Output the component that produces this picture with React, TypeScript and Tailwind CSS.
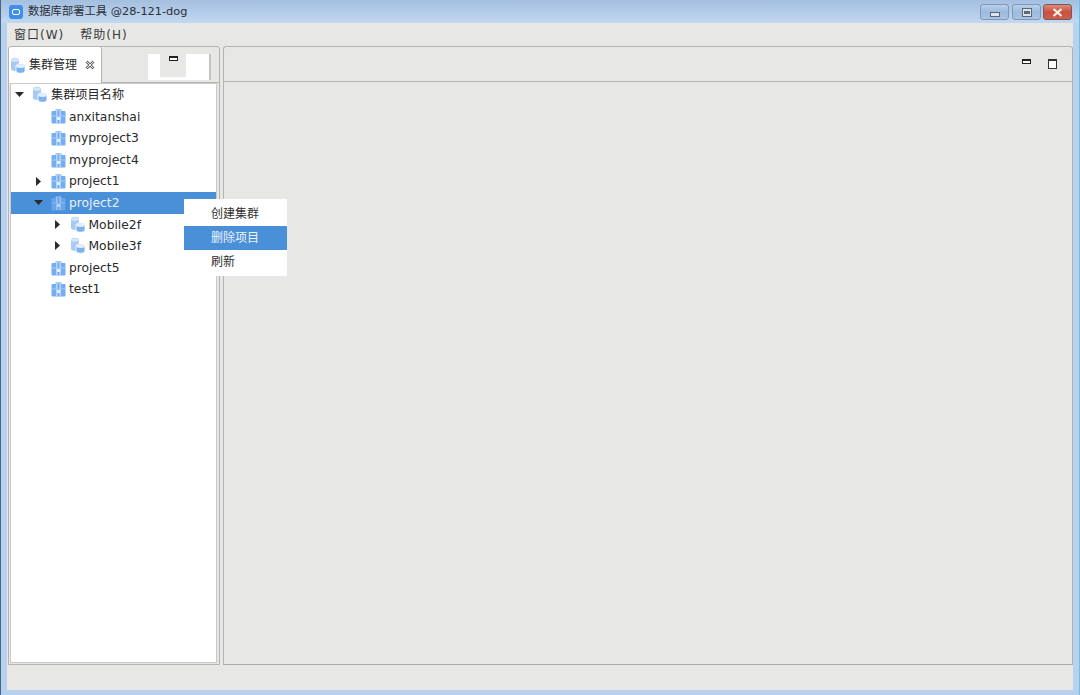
const LATIN_CJK = "font-['DejaVu_Sans','Noto_Sans_CJK_SC',sans-serif]";

function ClusterIcon({ dim = false }: { dim?: boolean }) {
  return (
    <svg width="16" height="17" viewBox="0 0 16 17" className={dim ? 'opacity-60 shrink-0' : 'shrink-0'}>
      <path d="M1 3c0-3 8-3 8 0v9c0 2.500-8 2.500-8 0z" fill="#a6caf4" />
      <ellipse cx="5" cy="3" rx="4" ry="1.800" fill="#d5e6fa" />
      <path d="M6 9c0-2.800 9-2.800 9 0v5c0 3-9 3-9 0z" fill="#7db2f0" stroke="#fff" strokeWidth="0.800" />
      <ellipse cx="10.500" cy="9" rx="4.500" ry="1.900" fill="#e3effc" />
    </svg>
  );
}

function ProjectIcon({ dim = false }: { dim?: boolean }) {
  return (
    <svg width="15" height="16" viewBox="0 0 15 16" className={dim ? 'opacity-70 shrink-0' : 'shrink-0'}>
      <rect x="0.500" y="3" width="14" height="12.500" rx="1" fill="#74aef2" />
      <path d="M4.500 3V1.200h6V3" fill="#8dbdf5" />
      <rect x="5" y="2" width="1.500" height="13" fill="#b9d6f8" />
      <rect x="8.500" y="2" width="1.500" height="13" fill="#b9d6f8" />
      <rect x="1" y="7.500" width="13" height="1" fill="#a8cbf6" />
      <rect x="6" y="9" width="3" height="3" fill="#e6f0fc" />
    </svg>
  );
}

function Caret({ open }: { open: boolean }) {
  return open ? (
    <svg width="9" height="5" viewBox="0 0 9 5" className="shrink-0">
      <path d="M0 0h9L4.500 5z" fill="#2a2a2a" />
    </svg>
  ) : (
    <svg width="5" height="9" viewBox="0 0 5 9" className="shrink-0">
      <path d="M0 0v9l5-4.500z" fill="#2a2a2a" />
    </svg>
  );
}

type Row = { label: string; depth: number; kind: 'cluster' | 'project'; caret?: 'open' | 'closed'; selected?: boolean };

const rows: Row[] = [
  { label: '集群项目名称', depth: 0, kind: 'cluster', caret: 'open' },
  { label: 'anxitanshai', depth: 1, kind: 'project' },
  { label: 'myproject3', depth: 1, kind: 'project' },
  { label: 'myproject4', depth: 1, kind: 'project' },
  { label: 'project1', depth: 1, kind: 'project', caret: 'closed' },
  { label: 'project2', depth: 1, kind: 'project', caret: 'open', selected: true },
  { label: 'Mobile2f', depth: 2, kind: 'cluster', caret: 'closed' },
  { label: 'Mobile3f', depth: 2, kind: 'cluster', caret: 'closed' },
  { label: 'project5', depth: 1, kind: 'project' },
  { label: 'test1', depth: 1, kind: 'project' },
];

const depthPad = ['pl-0 text-[12.200px]', 'pl-[19px] text-[12.300px]', 'pl-[38px] text-[12.300px]'];

function TreeRow({ row }: { row: Row }) {
  return (
    <div
      className={`flex h-[21.6px] items-center ${depthPad[row.depth]} ${
        row.selected ? 'bg-[#4a90d9] text-[#e8f0fa]' : 'text-[#2a2a2a]'
      }`}
    >
      <span className="flex w-[21px] shrink-0 justify-center pr-[5px]">
        {row.caret && <Caret open={row.caret === 'open'} />}
      </span>
      {row.kind === 'cluster' ? <ClusterIcon dim={row.selected} /> : <ProjectIcon dim={row.selected} />}
      <span className={`mt-[1px] whitespace-nowrap ${row.depth === 2 ? 'ml-[2.500px]' : 'ml-[3px]'}`}>{row.label}</span>
    </div>
  );
}

function MinMark() {
  return <span className="block h-[5px] w-[9px] border border-[#222] border-t-2 bg-white" />;
}

function MaxMark() {
  return <span className="block h-[10px] w-[9px] border border-[#333] border-t-2 bg-white" />;
}

function WinButton({ kind }: { kind: 'min' | 'max' | 'close' }) {
  if (kind === 'close') {
    return (
      <div className="flex h-[16px] w-[29px] items-center justify-center rounded-[3px] border border-[#7c5560] bg-gradient-to-b from-[#dd8a78] via-[#c9503c] to-[#c9604c]">
        <svg width="11" height="9" viewBox="0 0 11 9">
          <path d="M1.500 1l8 7M9.500 1l-8 7" stroke="#f4f0ee" strokeWidth="2.200" />
        </svg>
      </div>
    );
  }
  return (
    <div
      className={`flex h-[16px] w-[29px] items-center justify-center rounded-[3px] border border-[#7f98b8] bg-gradient-to-b from-[#b9d0ea] via-[#9db9dc] to-[#a9c4e4] ${
        kind === 'min' ? 'mr-[1px]' : ''
      }`}
    >
      {kind === 'min' ? (
        <span className="mt-[4px] block h-[5px] w-[10px] border border-[#59677a] bg-[#dfe3e8]" />
      ) : (
        <span className="flex h-[9px] w-[10px] items-center justify-center border border-[#59677a] bg-[#dfe3e8]">
          <span className="block h-[3px] w-[6px] bg-[#59677a]" />
        </span>
      )}
    </div>
  );
}

function ContextMenu() {
  return (
    <div className="absolute left-[183px] top-[199px] w-[103px] bg-white pb-[2px] pt-[2px] text-[12px] text-[#2f2f2f]">
      <div className="flex h-[25px] items-center pl-[27px]">创建集群</div>
      <div className="flex h-[24px] items-center bg-[#4a90d9] pl-[27px] text-[#edf3fb]">删除项目</div>
      <div className="flex h-[24px] items-center pl-[27px]">刷新</div>
    </div>
  );
}

export default function App() {
  return (
    <div
      className={`relative flex h-[695px] w-[1080px] flex-col overflow-hidden border-l border-r border-l-[#46658c] border-r-[#6cc0ea] bg-[#b8d1ec] ${LATIN_CJK}`}
    >
      {/* Title bar */}
      <div className="flex h-[23px] shrink-0 items-center bg-gradient-to-b from-[#a4bfdf] to-[#c2d8f0] pl-[8px] pr-[7px] pt-[1px]">
        <span className="flex h-[14px] w-[14px] items-center justify-center rounded-[3px] bg-[#3f8fe8]">
          <span className="block h-[6px] w-[8px] rounded-[2px] border border-white" />
        </span>
        <span className="ml-[5px] mt-[1px] text-[11.300px] text-[#2b2f36]">数据库部署工具 @28-121-dog</span>
        <div className="ml-auto flex gap-[2px]">
          <WinButton kind="min" />
          <WinButton kind="max" />
          <WinButton kind="close" />
        </div>
      </div>

      <div className="ml-[6px] mr-[6px] flex min-h-0 flex-1 flex-col bg-[#e7e7e5]">
        {/* Menu bar */}
        <div className="flex h-[23px] shrink-0 items-center gap-[16px] pl-[7px] text-[12px] tracking-[1px] text-[#3a3a3a]">
          <span>窗口(W)</span>
          <span>帮助(H)</span>
        </div>

        <div className="flex min-h-0 flex-1 pl-[1px]">
          {/* Left view */}
          <div className="flex h-[619px] w-[212px] shrink-0 flex-col rounded-t-[3px] border border-[#b4b4b2]">
            <div className="relative flex h-[36px] shrink-0">
              <div className="z-10 flex h-[36px] w-[93px] items-center rounded-t-[3px] border-r border-[#b4b4b2] bg-white pl-[1px] text-[12px] text-[#2a2a2a]">
                <ClusterIcon />
                <span className="ml-[3px] whitespace-nowrap">集群管理</span>
                <svg width="10" height="10" viewBox="0 0 10 10" className="ml-[8px]">
                  <path d="M1.500 1.500l7 7M8.500 1.500l-7 7" stroke="#666" strokeWidth="2.600" />
                  <path d="M1.500 1.500l7 7M8.500 1.500l-7 7" stroke="#fff" strokeWidth="0.900" />
                </svg>
              </div>
              <div className="flex flex-1 border-b border-[#b4b4b2]">
                <div className="relative ml-[46px] mt-[7px] h-[26px] w-[63px] border-r-2 border-[#c4c4c2] bg-white">
                  <div className="absolute left-[12px] top-[-2px] flex h-[25px] w-[26px] justify-center bg-[#e7e7e5] pt-[4px]">
                    <MinMark />
                  </div>
                </div>
              </div>
            </div>
            {/* Tree */}
            <div className="mb-[1px] ml-[1px] mr-[2px] min-h-0 flex-1 border border-[#c9c9c7] bg-white">
              {rows.map((row) => (
                <TreeRow key={row.label} row={row} />
              ))}
            </div>
          </div>

          {/* Sash */}
          <div className="w-[3px] shrink-0" />

          {/* Right view */}
          <div className="flex h-[619px] min-w-0 flex-1 flex-col rounded-t-[3px] border border-[#b4b4b2] border-b-[#a8a8a6] border-r-[#b0b0ae]">
            <div className="flex h-[35px] shrink-0 items-center justify-end gap-[17px] border-b border-[#b4b4b2] pr-[15px]">
              <span className="-mt-[5px]">
                <MinMark />
              </span>
              <MaxMark />
            </div>
            <div className="flex-1" />
          </div>
        </div>

        {/* Status bar */}
        <div className="h-[25px] shrink-0" />
      </div>
      <div className="h-[5px] shrink-0" />

      <ContextMenu />
    </div>
  );
}
